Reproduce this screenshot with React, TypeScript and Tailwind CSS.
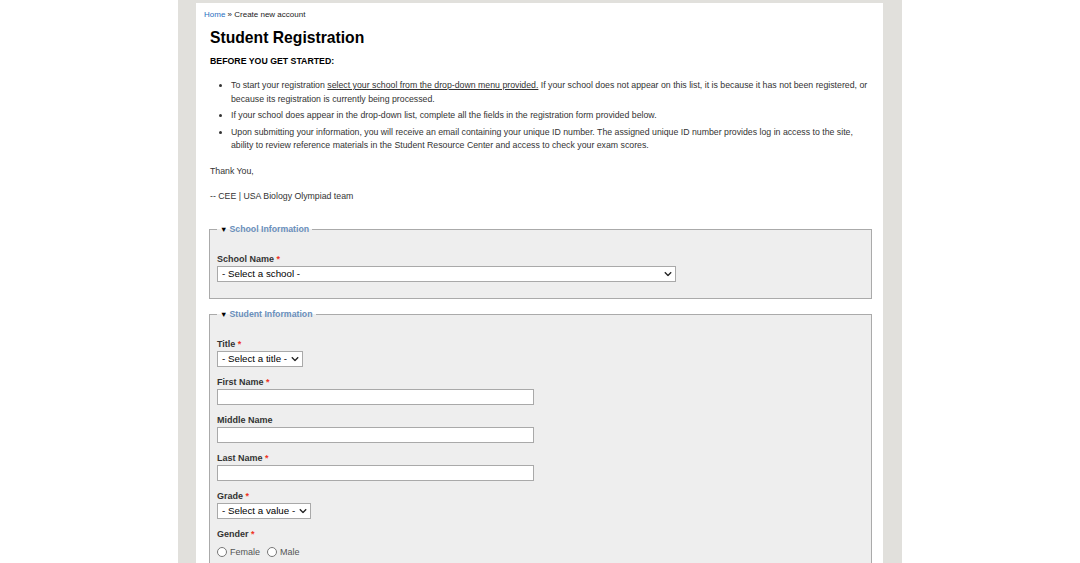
import React from "react";

const Chevron = () => (
  <svg width="8" height="5" viewBox="0 0 8 5" className="pointer-events-none absolute right-[4px] top-1/2 -translate-y-1/2">
    <path d="M0.8 0.8 L4 4 L7.2 0.8" fill="none" stroke="#222" strokeWidth="1.3" />
  </svg>
);

function Select({ text, w }: { text: string; w: string }) {
  return (
    <div className={`relative ${w}`}>
      <select className="block h-[16px] w-full appearance-none rounded-none border border-[#a9a9a9] bg-white pl-[4px] pr-[12px] text-[9.75px] leading-[14px] text-black outline-none">
        <option>{text}</option>
      </select>
      <Chevron />
    </div>
  );
}

function Label({ children, req }: { children: React.ReactNode; req?: boolean }) {
  return (
    <div className="mb-[1px] text-[9px] font-bold leading-[11px] text-[#333]">
      {children}
      {req && <span className="text-[#e32] font-bold"> *</span>}
    </div>
  );
}

function Field({ label, req, children }: { label: string; req?: boolean; children: React.ReactNode }) {
  return (
    <div className="mb-[10px]">
      <Label req={req}>{label}</Label>
      {children}
    </div>
  );
}

function TextInput() {
  return <input type="text" className="block h-[16px] w-[317px] rounded-none border border-[#a9a9a9] bg-white outline-none" />;
}

function Legend({ children }: { children: React.ReactNode }) {
  return (
    <legend className="px-[3px] text-[8.75px] font-bold leading-[11px] text-[#6a8fbb]">
      <span className="mr-[2px] inline-block align-middle text-[7.5px] leading-[7px] text-black">▼</span>
      {children}
    </legend>
  );
}

function Radio({ label }: { label: string }) {
  return (
    <label className="mr-[7px] inline-flex items-center gap-[3px] text-[9px] leading-[11px] text-[#555]">
      <span className="inline-block h-[10px] w-[10px] rounded-full border border-[#777] bg-white" />
      {label}
    </label>
  );
}

export default function App() {
  return (
    <div className="flex min-h-screen justify-center bg-white font-['Liberation_Sans',Arial,sans-serif]">
      <div className="w-[724px] bg-[#e1e0dc] pl-[18px] pr-[19px] pt-[3px]">
        <div className="min-h-[600px] bg-white pb-[20px]">
          <div className="pl-[8px] pt-[6px] text-[8px] leading-[12px] text-[#222]">
            <a className="text-[#2a6fbf]">Home</a> » Create new account
          </div>
          <div className="pl-[14px] pr-[11px]">
            <h1 className="mt-[7px] text-[15.7px] font-bold leading-[20px] text-black">Student Registration</h1>
            <p className="mt-[7px] text-[8.75px] font-bold leading-[13px] text-black">BEFORE YOU GET STARTED:</p>
            <ul className="mt-[11px] list-disc pl-[21px] text-[8.75px] leading-[13.5px] text-[#333]">
              <li className="mb-[3px]">
                To start your registration <span className="underline">select your school from the drop-down menu provided.</span> If your school does not appear on this list, it is because it has not been registered, or because its registration is currently being processed.
              </li>
              <li className="mb-[3px]">If your school does appear in the drop-down list, complete all the fields in the registration form provided below.</li>
              <li>
                Upon submitting your information, you will receive an email containing your unique ID number. The assigned unique ID number provides log in access to the site, ability to review reference materials in the Student Resource Center and access to check your exam scores.
              </li>
            </ul>
            <p className="mt-[12.5px] text-[8.75px] leading-[13.5px] text-[#333]">Thank You,</p>
            <p className="mt-[11.5px] text-[8.75px] leading-[13.5px] text-[#333]">-- CEE | USA Biology Olympiad team</p>

            <fieldset className="-ml-[1px] mt-[20px] border border-[#aaa] bg-[#eeeeee] px-[7px] pb-[16px] pt-[19px]">
              <Legend>School Information</Legend>
              <Label req>School Name</Label>
              <Select text="- Select a school -" w="w-[459px]" />
            </fieldset>

            <fieldset className="-ml-[1px] mt-[10px] border border-[#aaa] bg-[#eeeeee] px-[7px] pb-[16px] pt-[19px]">
              <Legend>Student Information</Legend>
              <Field label="Title" req>
                <Select text="- Select a title -" w="w-[86px]" />
              </Field>
              <Field label="First Name" req>
                <TextInput />
              </Field>
              <Field label="Middle Name">
                <TextInput />
              </Field>
              <Field label="Last Name" req>
                <TextInput />
              </Field>
              <Field label="Grade" req>
                <Select text="- Select a value -" w="w-[94px]" />
              </Field>
              <Field label="Gender" req>
                <div className="mt-[7px] flex items-center">
                  <Radio label="Female" />
                  <Radio label="Male" />
                </div>
              </Field>
            </fieldset>
          </div>
        </div>
      </div>
    </div>
  );
}
